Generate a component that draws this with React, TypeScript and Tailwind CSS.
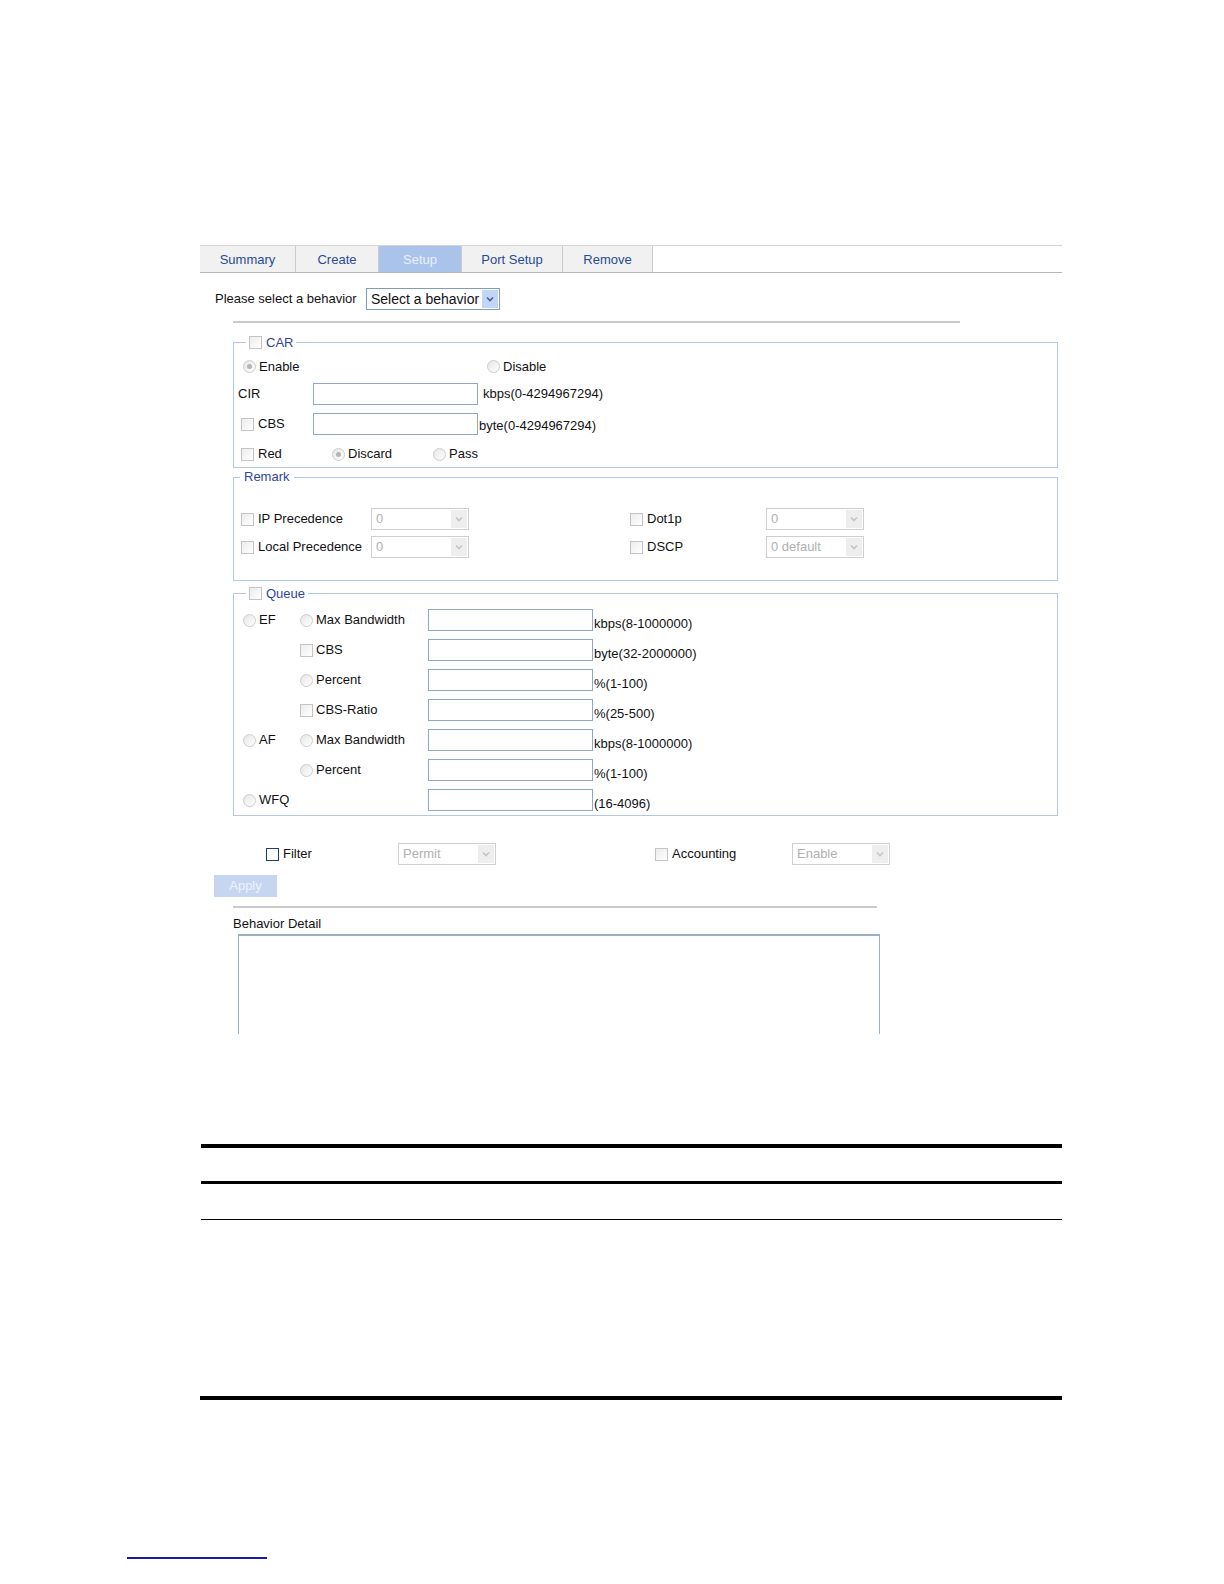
import clsx from "clsx";

const FONT = "font-['Liberation_Sans',Arial,sans-serif]";

const Chevron = ({ color }: { color: string }) => (
  <svg width="8" height="6" viewBox="0 0 8 6">
    <path d="M1 1.5 L4 4.5 L7 1.5" fill="none" stroke={color} strokeWidth="1.6" />
  </svg>
);

const Checkbox = ({ active = false }: { active?: boolean }) => (
  <span
    className={clsx(
      "inline-block w-[13px] h-[13px] shrink-0 border",
      active
        ? "border-[#1f3c6c] bg-white"
        : "border-[#c4c4c4] bg-linear-to-br from-[#ececec] to-white"
    )}
  />
);

const Radio = ({ checked = false }: { checked?: boolean }) => (
  <span className="inline-flex items-center justify-center w-[13px] h-[13px] shrink-0 rounded-full border border-[#cdcdcd] bg-linear-to-br from-[#e6e6e6] to-white">
    {checked && <span className="w-[5px] h-[5px] rounded-full bg-[#b4b4b4]" />}
  </span>
);

const TextBox = () => (
  <div className="w-[165px] h-[22px] shrink-0 border border-[#8fa9c4] bg-white" />
);

const DisabledSelect = ({ value }: { value: string }) => (
  <div className="flex w-[98px] h-[22px] shrink-0 border border-[#cfcfcf] bg-white">
    <span className="flex-1 pl-[4px] leading-[20px] text-[#b0b0b0]">{value}</span>
    <span className="flex items-center justify-center w-[16px] m-[1px] bg-[#eeeeee]">
      <Chevron color="#c4c4c4" />
    </span>
  </div>
);

const tabs = [
  { label: "Summary", width: "w-[96px]" },
  { label: "Create", width: "w-[83px]" },
  { label: "Setup", width: "w-[83px]", active: true },
  { label: "Port Setup", width: "w-[101px]" },
  { label: "Remove", width: "w-[90px]" },
];

const queueRows = [
  { main: "EF", kind: "radio", label: "Max Bandwidth", range: "kbps(8-1000000)" },
  { kind: "check", label: "CBS", range: "byte(32-2000000)" },
  { kind: "radio", label: "Percent", range: "%(1-100)" },
  { kind: "check", label: "CBS-Ratio", range: "%(25-500)" },
  { main: "AF", kind: "radio", label: "Max Bandwidth", range: "kbps(8-1000000)" },
  { kind: "radio", label: "Percent", range: "%(1-100)" },
  { main: "WFQ", kind: "none", label: "", range: "(16-4096)" },
];

const Legend = ({ children }: { children: React.ReactNode }) => (
  <legend className="ml-[12px] px-[3px] flex items-center gap-[4px] h-[17px] leading-[17px] text-[#2f4599]">
    {children}
  </legend>
);

const App = () => {
  return (
    <div className={clsx("w-full bg-white text-[13px] text-[#111] pt-[245px] pb-[20px]", FONT)}>
      <div className="ml-[200px] w-[862px] flex flex-col">
        {/* tab bar */}
        <div className="flex h-[28px] border-t border-b border-t-[#d4d4d4] border-b-[#b8b8b8]">
          {tabs.map((tab) => (
            <div
              key={tab.label}
              className={clsx(
                "flex items-center justify-center border-r border-[#cbcbcb] pt-[2px]",
                tab.width,
                tab.active ? "bg-[#a9c3ea] text-[#e9f0fb]" : "bg-[#f1f1f1] text-[#2a4a90]"
              )}
            >
              {tab.label}
            </div>
          ))}
        </div>

        {/* behavior select */}
        <div className="mt-[15px] h-[22px] flex items-center pl-[15px]">
          <span className="w-[151px]">Please select a behavior</span>
          <div className="flex w-[134px] h-[22px] border border-[#7f9db9] bg-white">
            <span className="flex-1 pl-[4px] leading-[20px] text-[14px] text-[#111]">Select a behavior</span>
            <span className="flex items-center justify-center w-[16px] m-[1px] bg-[#c2d4f7]">
              <Chevron color="#4d5f8a" />
            </span>
          </div>
        </div>

        <div className="mt-[11px] ml-[33px] w-[727px] h-[2px] bg-[#cacaca]" />

        {/* CAR */}
        <fieldset className="mt-[11px] ml-[33px] w-[825px] border border-[#b3c8e2] pb-[1px]">
          <Legend>
            <Checkbox />
            <span>CAR</span>
          </Legend>
          <div className="flex items-center h-[31px] pl-[9px]">
            <div className="w-[244px] flex items-center gap-[3px]">
              <Radio checked />
              <span>Enable</span>
            </div>
            <div className="flex items-center gap-[3px]">
              <Radio />
              <span>Disable</span>
            </div>
          </div>
          <div className="flex items-center h-[24px] pl-[4px]">
            <span className="w-[75px]">CIR</span>
            <TextBox />
            <span className="ml-[5px]">kbps(0-4294967294)</span>
          </div>
          <div className="flex items-center mt-[6px] h-[24px] pl-[7px]">
            <div className="w-[72px] flex items-center gap-[4px]">
              <Checkbox />
              <span>CBS</span>
            </div>
            <TextBox />
            <span className="ml-[1px] self-end leading-[20px]">byte(0-4294967294)</span>
          </div>
          <div className="flex items-center mt-[6px] h-[24px] pl-[7px]">
            <div className="w-[91px] flex items-center gap-[4px]">
              <Checkbox />
              <span>Red</span>
            </div>
            <div className="w-[101px] flex items-center gap-[3px]">
              <Radio checked />
              <span>Discard</span>
            </div>
            <div className="flex items-center gap-[3px]">
              <Radio />
              <span>Pass</span>
            </div>
          </div>
        </fieldset>

        {/* Remark */}
        <fieldset className="mt-[1px] ml-[33px] w-[825px] border border-[#b3c8e2] pb-[22px]">
          <legend className="ml-[6px] px-[4px] h-[16px] leading-[16px] text-[#2f4599]">Remark</legend>
          <div className="flex items-center mt-[23px] h-[22px] pl-[7px]">
            <div className="w-[130px] flex items-center gap-[4px]">
              <Checkbox />
              <span>IP Precedence</span>
            </div>
            <DisabledSelect value="0" />
            <div className="ml-[161px] w-[136px] flex items-center gap-[4px]">
              <Checkbox />
              <span>Dot1p</span>
            </div>
            <DisabledSelect value="0" />
          </div>
          <div className="flex items-center mt-[6px] h-[22px] pl-[7px]">
            <div className="w-[130px] flex items-center gap-[4px]">
              <Checkbox />
              <span>Local Precedence</span>
            </div>
            <DisabledSelect value="0" />
            <div className="ml-[161px] w-[136px] flex items-center gap-[4px]">
              <Checkbox />
              <span>DSCP</span>
            </div>
            <DisabledSelect value="0 default" />
          </div>
        </fieldset>

        {/* Queue */}
        <fieldset className="mt-[4px] ml-[33px] w-[825px] border border-[#b3c8e2]">
          <Legend>
            <Checkbox />
            <span>Queue</span>
          </Legend>
          <div className="mt-[3px] flex flex-col">
            {queueRows.map((row, i) => (
              <div key={i} className="flex items-center h-[30px] pl-[9px]">
                <div className="w-[57px] flex items-center gap-[3px]">
                  {row.main && (
                    <>
                      <Radio />
                      <span>{row.main}</span>
                    </>
                  )}
                </div>
                <div className="w-[128px] flex items-center gap-[3px]">
                  {row.kind === "radio" && <Radio />}
                  {row.kind === "check" && <Checkbox />}
                  {row.label && <span>{row.label}</span>}
                </div>
                <TextBox />
                <span className="ml-[1px] self-end leading-[22px]">{row.range}</span>
              </div>
            ))}
          </div>
        </fieldset>

        {/* Filter / Accounting */}
        <div className="flex items-center mt-[27px] h-[22px] pl-[66px]">
          <div className="w-[132px] flex items-center gap-[4px]">
            <Checkbox active />
            <span>Filter</span>
          </div>
          <DisabledSelect value="Permit" />
          <div className="ml-[159px] w-[137px] flex items-center gap-[4px]">
            <Checkbox />
            <span>Accounting</span>
          </div>
          <DisabledSelect value="Enable" />
        </div>

        <button className="mt-[10px] ml-[14px] w-[63px] h-[22px] bg-[#c6d6f1] text-[#eef3fb] text-[13px] text-center">
          Apply
        </button>

        <div className="mt-[9px] ml-[33px] w-[644px] h-[2px] bg-[#cacaca]" />

        <div className="mt-[8px] ml-[33px] h-[16px] leading-[16px]">Behavior Detail</div>
        <div className="mt-[2px] ml-[38px] w-[642px] h-[100px] border-t-2 border-l border-r border-[#9ab0c0]" />

        {/* document rules */}
        <div className="mt-[110px] ml-[1px] h-[4px] bg-black" />
        <div className="mt-[33px] ml-[1px] h-[3px] bg-black" />
        <div className="mt-[35px] ml-[1px] h-[1px] bg-black" />
        <div className="mt-[176px] h-[4px] bg-black" />
      </div>
      <div className="mt-[157px] ml-[127px] w-[140px] h-[2px] bg-[#1a1a9a]" />
    </div>
  );
};

export default App;
